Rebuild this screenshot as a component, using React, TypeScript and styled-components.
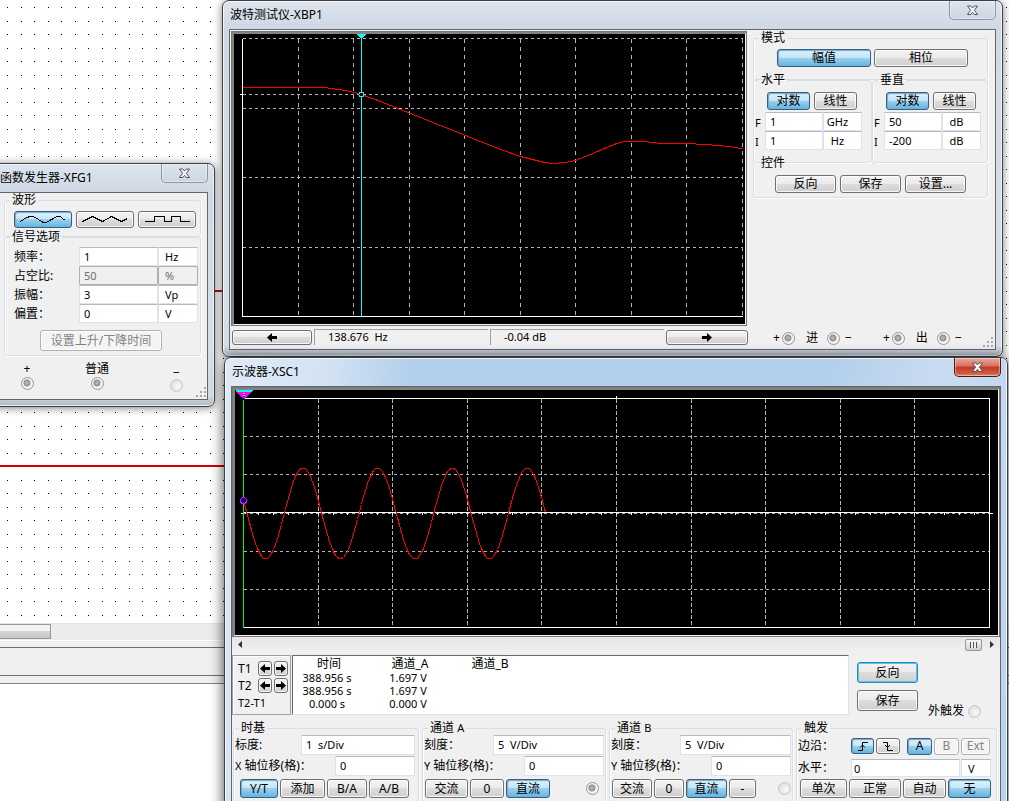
import React from 'react';
import styled, { createGlobalStyle, css } from 'styled-components';

const GlobalStyle = createGlobalStyle`
  *, *::before, *::after { box-sizing: border-box; }
  body { margin: 0; background: #fff; }
  body, button, input {
    font-family: "Noto Sans", "Noto Sans CJK SC", sans-serif;
    font-size: 12px;
    line-height: 16px;
    color: #000;
  }
`;

/* ---------- desktop ---------- */

const Desktop = styled.main`
  position: relative;
  display: flex;
  flex-direction: column;
  height: 100vh;
  overflow: hidden;
  background: #f0f0f0;
`;

const Sheet = styled.div`
  flex: 1;
  min-height: 0;
`;

const SheetDots = styled.svg`
  display: block;
  width: 100%;
  height: 100%;
  background: #fff;
`;

const SheetScroll = styled.div`
  height: 18px;
  border-top: 1px solid #e3e3e3;
  border-bottom: 1px solid #fff;
  background: #ececec;
`;

const SheetThumb = styled.div`
  width: 51px;
  height: 15px;
  border: 1px solid #979797;
  border-left: 0;
  background: linear-gradient(#f3f3f3 0 45%, #d6d6d8 50%, #c6c7ca);
`;

const TabStrip = styled.div`
  height: 29px;
  margin: 6px 0 7px;
  border: solid #6f6b70;
  border-width: 1px 0;
`;

const LogPane = styled.div`
  height: 118px;
  border-top: 1px solid #828282;
  background: #fff;
`;

/* ---------- window chrome ---------- */

type Place = { $x: number; $y: number; $w: number; $active?: boolean };

const Frame = styled.section<Place>`
  position: absolute;
  left: ${p => p.$x}px;
  top: ${p => p.$y}px;
  width: ${p => p.$w}px;
  padding: 0 6px 6px;
  border: 1px solid #3c4148;
  border-radius: 7px;
  background: ${p =>
    p.$active
      ? 'linear-gradient(100deg, #dfeaf6 0, #d3e3f4 12%, #b2cfeb 22%, #b2cfeb 70%, #cbdcf1 84%, #b7d2ee 100%)'
      : 'linear-gradient(#dde4ee, #cfd8e4 28px, #d4dde8 60%, #d4dde8 calc(100% - 10px), #aeb8c4)'};
  box-shadow: inset 0 0 0 1px rgba(255, 255, 255, 0.75),
    ${p => (p.$active ? '0 2px 14px rgba(0,0,0,.75)' : '0 1px 8px rgba(0,0,0,.5)')};
`;

const TitleBar = styled.header`
  display: flex;
  justify-content: space-between;
  height: 28px;
`;

const Title = styled.h1`
  margin: 0;
  padding-left: 1px;
  font-size: 12px;
  font-weight: 400;
  line-height: 28px;
`;

const CloseButton = styled.button<{ $active?: boolean }>`
  display: flex;
  align-items: center;
  justify-content: center;
  width: 47px;
  height: 19px;
  padding: 0;
  border: 1px solid ${p => (p.$active ? '#4b1812' : '#8c96a3')};
  border-top: 0;
  border-radius: 0 0 5px 5px;
  background: ${p =>
    p.$active
      ? 'linear-gradient(#e8a99c, #d6705c 45%, #c03a25 50%, #cf5a42 85%, #e09070)'
      : 'linear-gradient(#dce3ec, #cdd6e2)'};
  box-shadow: inset 0 0 0 1px rgba(255, 255, 255, 0.4);
`;

const Client = styled.div`
  display: flex;
  border: 1px solid #63686d;
  background: #f0f0f0;
`;

const Column = styled(Client)`
  flex-direction: column;
`;

const Grip = styled.svg`
  display: block;
  flex: none;
  width: 12px;
  height: 12px;
  fill: #a8a8a8;
`;

const SizeGrip = () => (
  <Grip viewBox="0 0 12 12" aria-hidden="true">
    <path d="M9 1h2v2h-2zM5 5h2v2h-2zM9 5h2v2h-2zM1 9h2v2h-2zM5 9h2v2h-2zM9 9h2v2h-2z" />
  </Grip>
);

function ToolWindow(props: {
  title: string;
  x: number;
  y: number;
  w: number;
  active?: boolean;
  children: React.ReactNode;
}) {
  const { title, x, y, w, active, children } = props;
  return (
    <Frame $x={x} $y={y} $w={w} $active={active} aria-label={title}>
      <TitleBar>
        <Title>{title}</Title>
        <CloseButton $active={active} aria-label="关闭">
          <svg width="13" height="11" viewBox="0 0 13 11">
            <path
              d="M1.5 1h3.3l1.7 2 1.7-2h3.3L8.4 5.2l3.1 4.300H8.200L6.500 7.300 4.800 9.500H1.500l3.100-4.300z"
              fill={active ? '#fff' : '#f4f6f9'}
              stroke="#4d5462"
              strokeWidth="1"
            />
          </svg>
        </CloseButton>
      </TitleBar>
      {children}
    </Frame>
  );
}

/* ---------- controls ---------- */

const Button = styled.button<{ $w: number; $h?: number; $on?: boolean; $focus?: boolean }>`
  display: flex;
  flex: none;
  align-items: center;
  justify-content: center;
  width: ${p => p.$w}px;
  height: ${p => p.$h ?? 19}px;
  padding: 0;
  line-height: 14px;
  border: 1px solid #707070;
  border-radius: 3px;
  background: linear-gradient(#f3f3f3, #ebebeb 48%, #dddddd 50%, #cfcfcf);
  box-shadow: inset 0 0 0 1px rgba(255, 255, 255, 0.8);
  ${p =>
    p.$on &&
    css`
      border-color: #2c628b;
      background: linear-gradient(#e0f1fa, #c4e5f6 48%, #98d1ef 50%, #68b3db);
      box-shadow: inset 1px 1px 1px #7ba6c2;
    `}
  ${p =>
    p.$focus &&
    css`
      border-color: #3c7fb1;
      box-shadow: inset 0 0 0 1px #48cdf2;
    `}
  &:disabled {
    border-color: #adb2b5;
    color: #838383;
    background: #f4f4f4;
  }
`;

const Field = styled.input<{ $w: number; $h?: number; $indent?: number; $center?: boolean }>`
  flex: none;
  width: ${p => p.$w}px;
  height: ${p => p.$h ?? 20}px;
  padding: 0 ${p => (p.$center ? 10 : 0)}px 0 ${p => p.$indent ?? 4}px;
  border: 1px solid #dde3ea;
  border-top-color: #b4b9c2;
  border-radius: 1px;
  background: #fff;
  font-size: 11px;
  text-align: ${p => (p.$center ? 'center' : 'left')};
  &:disabled {
    border-color: #afafaf;
    color: #6d6d6d;
    background: #f0f0f0;
  }
`;

const Socket = styled.input.attrs({ type: 'radio' })`
  appearance: none;
  flex: none;
  width: 13px;
  height: 13px;
  margin: 0;
  border: 1px solid #959595;
  border-radius: 50%;
  background: radial-gradient(circle at 45% 45%, #c4c4c4 0, #8e8e8e 3px, #f4f4f4 4px);
  &:disabled {
    border-color: #c6c6c6;
    background: radial-gradient(circle at 60% 60%, #fafafa 0, #e2e2e2 6px);
  }
`;

const Group = styled.fieldset<{ $w?: number; $bottom?: number; $top?: number; $right?: number }>`
  min-width: 0;
  width: ${p => (p.$w ? `${p.$w}px` : 'auto')};
  margin: 0;
  padding: ${p => p.$top ?? 0}px ${p => p.$right ?? 1}px ${p => p.$bottom ?? 3}px 1px;
  border: 1px solid #d5dfe5;
  border-radius: 3px;
  box-shadow: inset 1px 0 0 #fff, 1px 1px 0 #fff;
`;

const Legend = styled.legend`
  margin-left: 4px;
  padding: 0 2px;
  line-height: 12px;
`;

const Stack = styled.div`
  & > * + * {
    margin-top: -6px;
  }
`;

const Row = styled.div<{ $indent?: number; $gap?: number; $top?: number }>`
  display: flex;
  align-items: center;
  gap: ${p => p.$gap ?? 3}px;
  margin-top: ${p => p.$top ?? 0}px;
  padding-left: ${p => p.$indent ?? 0}px;
`;

const Push = styled.div`
  flex: 1;
`;

const ArrowLeft = () => (
  <svg width="10" height="9" viewBox="0 0 10 9" aria-hidden="true">
    <path d="M0 4.500L5 0v3H10v3H5v3z" />
  </svg>
);

const ArrowRight = () => (
  <svg width="10" height="9" viewBox="0 0 10 9" aria-hidden="true">
    <path d="M10 4.500L5 0v3H0v3h5v3z" />
  </svg>
);

/* ---------- instrument screens ---------- */

const Screen = styled.div`
  border: solid;
  border-width: 3px 2px 2px 3px;
  border-color: #85837e #f6f4ee #f6f4ee #85837e;
  outline: 1px solid #77777a;
  outline-offset: -1px;
  background: #000;
`;

const Plot = styled.svg`
  display: block;
  width: 100%;
  height: auto;
  shape-rendering: crispEdges;
  fill: none;
`;

const path = (points: number[][]) => points.map(([x, y], i) => `${i ? 'L' : 'M'}${x} ${y}`).join('');

const bodeCurve = path([
  [0, 49], [82, 49], [96, 51], [108, 53], [119, 56], [138, 63], [158, 71], [168, 75], [208, 91],
  [258, 111], [278, 118], [290, 121], [302, 124], [311, 125], [323, 124], [333, 122], [348, 116],
  [363, 109.5], [373, 105.5], [381, 103], [403, 103], [418, 105], [453, 105.5], [478, 107],
  [493, 109], [500, 110.5],
]);

const bodeColumns = [56, 111, 167, 222, 278, 333, 389, 444, 500];
const bodeRows = [0, 56, 70, 139, 209];

function BodeScreen() {
  return (
    <Screen>
      <Plot viewBox="0 0 511 290" role="img" aria-label="幅频曲线">
        <g transform="translate(8.5 4.5)">
          <g stroke="#b4b4b4" strokeDasharray="3 3">
            {bodeColumns.map(x => <path key={x} d={`M${x} 0V278`} strokeDasharray="4 4" />)}
            {bodeRows.map(y => <path key={y} d={`M0 ${y}H500`} />)}
          </g>
          <path d="M0 0V278H500M-3 56H0" stroke="#fff" />
          <path d={bodeCurve} stroke="#f00" />
          <path d="M119 -5V278" stroke="#0ff" />
          <path d="M114 -5H124L119 1Z" fill="#0ff" />
          <circle cx="119" cy="56" r="2.5" stroke="#0ff" fill="#000" />
        </g>
      </Plot>
    </Screen>
  );
}

const scopeWave = path(
  Array.from({ length: 152 }, (_, i) => {
    const x = i * 2;
    return [x, Math.round(115 + 45.5 * Math.sin((2 * Math.PI * (x - 3.5)) / 74.7))];
  }).map(([x, y], i) => (i === 0 ? [0, 102] : [x, y])),
);
const scopeColumns = [75, 149, 224, 298, 373, 448, 522, 597, 671];
const scopeRows = [38, 76, 115, 153, 191];

function ScopeScreen() {
  return (
    <Screen>
      <Plot viewBox="0 0 763 245" role="img" aria-label="示波器波形">
        <g transform="translate(8.5 8.5)">
          <g stroke="#b4b4b4" strokeDasharray="3 3">
            {scopeColumns.map(x => <path key={x} d={`M${x} 0V229`} strokeDasharray="4 2" />)}
            {scopeRows.map(y => <path key={y} d={`M0 ${y}H746`} />)}
          </g>
          <path d="M0 0H746V229H0M373 -3V0M-3 115H0M746 115H749M0 114H746" stroke="#fff" />
          <path
            d={Array.from({ length: 49 }, (_, i) => `M${Math.round((i + 1) * 14.92)} 114v2`).join('')}
            stroke="#fff"
          />
          <path d={scopeWave} stroke="#f00" />
          <path d="M0 0V229" stroke="#0f0" />
          <path d="M-8 -8H9L0 1Z" fill="#f0f" />
          <path d="M-8 -8H9M-7 -7H8" stroke="#0ff" />
          <path d="M-1 -5H1M-1 -3H1" stroke="#ff0" />
          <path d="M0 -1V1M-1 -4H1M-1 -2H1" stroke="#00c" />
          <circle cx="0" cy="102" r="3" stroke="#f0f" fill="#000080" />
        </g>
      </Plot>
    </Screen>
  );
}

/* ---------- function generator ---------- */

const Parameters = styled.div`
  display: grid;
  grid-template-columns: 65px 79px 40px;
  grid-auto-rows: 19px;
  align-items: center;
  padding-left: 8px;
`;

const GeneratorBody = styled.div`
  padding: 1px 6px 0 4px;
`;

const GeneratorPorts = styled.div`
  display: flex;
  align-items: flex-end;
  height: 43px;
  padding: 0 0 1px 14px;
`;

const PortColumn = styled.label`
  display: flex;
  flex-direction: column;
  align-items: center;
  width: 26px;
  margin-right: 44px;
  padding-bottom: 8px;
  line-height: 16px;
`;

const PortEnd = styled.div`
  display: flex;
  align-items: flex-end;
  gap: 12px;
`;

const PortMinus = styled.label`
  display: flex;
  flex-direction: column;
  align-items: center;
  padding-bottom: 6px;
  line-height: 12px;
`;

const Center = styled.div`
  display: flex;
  justify-content: center;
  margin: 7px 3px 0 0;
`;

const waves = [
  { name: '正弦波', d: 'M0 5L3 3L6 1L10 0H12L15 1L18 3L21 5L23 6H26L29 4L33 2L36 0H40L42 2L45 4' },
  { name: '三角波', d: 'M0 5L10 0L20 5L29 0L39 5L45 2' },
  { name: '方波', d: 'M0 5H10V0H20V5H27V0H36V5H45' },
];

const parameters = [
  { label: '频率：', value: '1', unit: 'Hz' },
  { label: '占空比:', value: '50', unit: '%', off: true },
  { label: '振幅：', value: '3', unit: 'Vp' },
  { label: '偏置：', value: '0', unit: 'V' },
];

function FunctionGenerator() {
  return (
    <ToolWindow title="函数发生器-XFG1" x={-8} y={163} w={223}>
      <Column>
        <GeneratorBody>
          <Stack>
            <Group $top={5} $bottom={8}>
              <Legend>波形</Legend>
              <Row $indent={8} $gap={4}>
                {waves.map((w, i) => (
                  <Button key={w.name} $w={58} $h={17} $on={i === 0} aria-label={w.name}>
                    <svg width="46" height="8" viewBox="0 0 46 8" shapeRendering="crispEdges">
                      <path d={w.d} transform="translate(.5 .5)" fill="none" stroke="#000" />
                    </svg>
                  </Button>
                ))}
              </Row>
            </Group>
            <Group $top={4} $bottom={4}>
              <Legend>信号选项</Legend>
              <Parameters>
                {parameters.map(p => (
                  <React.Fragment key={p.label}>
                    <label htmlFor={`fg-${p.unit}`}>{p.label}</label>
                    <Field id={`fg-${p.unit}`} $w={79} $h={19} disabled={p.off} defaultValue={p.value} />
                    <Field $w={40} $h={19} $indent={6} disabled={p.off} defaultValue={p.unit} aria-label={`${p.label}单位`} />
                  </React.Fragment>
                ))}
              </Parameters>
              <Center>
                <Button $w={122} $h={21} disabled>设置上升/下降时间</Button>
              </Center>
            </Group>
          </Stack>
        </GeneratorBody>
        <GeneratorPorts>
          <PortColumn>+<Socket name="fg-plus" /></PortColumn>
          <PortColumn>普通<Socket name="fg-common" /></PortColumn>
          <Push />
          <PortEnd>
            <PortMinus>−<Socket name="fg-minus" disabled /></PortMinus>
            <SizeGrip />
          </PortEnd>
        </GeneratorPorts>
      </Column>
    </ToolWindow>
  );
}

/* ---------- bode plotter ---------- */

const BodeLeft = styled.div`
  flex: none;
  width: 518px;
  padding: 1px 0 4px 1px;
`;

const BodeScreenBox = styled.div`
  padding-right: 1px;
`;

const Readout = styled.output`
  flex: 1;
  height: 16px;
  padding-left: 13px;
  border: solid #a0a0a0;
  border-width: 1px 0 0 1px;
  font-size: 11px;
  line-height: 14px;
  white-space: pre;
`;

const BodeSide = styled.div`
  flex: 1;
  display: flex;
  flex-direction: column;
  min-width: 0;
  padding: 2px 1px 1px 5px;
`;

const SideGroups = styled(Stack)`
  padding-right: 6px;
`;

const Halves = styled.div`
  display: grid;
  grid-template-columns: 119px 1fr;
`;

const Limits = styled.div`
  display: grid;
  grid-template-columns: 10px 58px 39px;
  align-items: center;
  margin-top: 2px;
  font-size: 11px;
  & > label { padding-top: 3px; }
`;

const Ports = styled.div`
  display: flex;
  align-items: flex-end;
  padding-left: 20px;
`;

const PortPair = styled.div`
  display: flex;
  align-items: center;
  gap: 2px;
  margin-right: 31px;
  padding-bottom: 2px;
  &:last-of-type { margin-right: 0; }
  & > b { font-weight: 400; padding: 0 7px 0 9px; }
`;

function AxisGroup(props: { name: string; id: string; limits: string[][] }) {
  const { name, id, limits } = props;
  return (
    <Group $top={6} $bottom={12}>
      <Legend>{name}</Legend>
      <Row $indent={12} $gap={4}>
        <Button $w={43} $h={18} $on>对数</Button>
        <Button $w={43} $h={18}>线性</Button>
      </Row>
      <Limits>
        {limits.map(([key, value, unit]) => (
          <React.Fragment key={key}>
            <label htmlFor={id + key}>{key}</label>
            <Field id={id + key} $w={58} $h={19} defaultValue={value} />
            <Field $w={39} $h={19} $center $indent={0} defaultValue={unit} aria-label={`${name}${key}单位`} />
          </React.Fragment>
        ))}
      </Limits>
    </Group>
  );
}

function BodePlotter() {
  return (
    <ToolWindow title="波特测试仪-XBP1" x={222} y={0} w={781}>
      <Client>
        <BodeLeft>
          <BodeScreenBox><BodeScreen /></BodeScreenBox>
          <Row $top={3} $gap={2} $indent={1}>
            <Button $w={80} $h={15} aria-label="左移"><ArrowLeft /></Button>
            <Readout>138.676  Hz</Readout>
            <Readout>-0.04 dB</Readout>
            <Button $w={82} $h={15} aria-label="右移"><ArrowRight /></Button>
          </Row>
        </BodeLeft>
        <BodeSide>
          <SideGroups>
            <Group $top={5} $bottom={12}>
              <Legend>模式</Legend>
              <Row $indent={22}>
                <Button $w={94} $h={18} $on>幅值</Button>
                <Button $w={94} $h={18}>相位</Button>
              </Row>
            </Group>
            <Halves>
              <AxisGroup name="水平" id="h" limits={[['F', '1', 'GHz'], ['I', '1', 'Hz']]} />
              <AxisGroup name="垂直" id="v" limits={[['F', '50', 'dB'], ['I', '-200', 'dB']]} />
            </Halves>
            <Group $top={6} $bottom={4}>
              <Legend>控件</Legend>
              <Row $indent={20} $gap={4}>
                <Button $w={61} $h={18}>反向</Button>
                <Button $w={61} $h={18}>保存</Button>
                <Button $w={61} $h={18}>设置...</Button>
              </Row>
            </Group>
          </SideGroups>
          <Push />
          <Ports>
            {['进', '出'].map(name => (
              <PortPair key={name}>
                +<Socket name={`${name}+`} aria-label={`${name} +`} />
                <b>{name}</b>
                <Socket name={`${name}-`} aria-label={`${name} −`} />&nbsp;−
              </PortPair>
            ))}
            <SpacerGrip><SizeGrip /></SpacerGrip>
          </Ports>
        </BodeSide>
      </Client>
    </ToolWindow>
  );
}

const SpacerGrip = styled.span`
  flex: 1;
  display: flex;
  justify-content: flex-end;
  min-width: 12px;
  margin-left: -31px;
`;

/* ---------- oscilloscope ---------- */

const TimeScroll = styled.div`
  display: flex;
  align-items: center;
  height: 15px;
  margin-bottom: 3px;
  padding: 0 6px;
  background: linear-gradient(#e6e6e6, #f0f0f0);
`;

const TimeThumb = styled.div`
  width: 17px;
  height: 12px;
  margin-right: 8px;
  padding: 2px 4px;
  border: 1px solid #9a9a9a;
  border-radius: 2px;
  background: linear-gradient(#f5f5f5, #d0d0d2);
  &::before {
    content: '';
    display: block;
    height: 6px;
    background: repeating-linear-gradient(90deg, #555 0 1px, #eee 1px 3px);
  }
`;

const Readings = styled.div`
  display: flex;
  height: 60px;
`;

const CursorPanel = styled.div`
  display: grid;
  grid-template-columns: 18px 14px 14px;
  grid-template-rows: 15px 15px 16px;
  gap: 2px;
  align-items: center;
  width: 59px;
  margin-right: 1px;
  padding: 5px 2px 0 5px;
  border: 1px solid #a0a0a0;
  box-shadow: inset 1px 1px 0 #fff;
  & > span { white-space: nowrap; }
`;

const TableBox = styled.div`
  width: 557px;
  border: 1px solid #696969;
  border-right-color: #e3e3e3;
  border-bottom-color: #e3e3e3;
  background: #fff;
`;

const ReadingTable = styled.table`
  table-layout: fixed;
  width: 228px;
  border-collapse: collapse;
  text-align: center;
  font-size: 11px;
  line-height: 13px;
  th, td { padding: 0; height: 13px; font-weight: 400; white-space: nowrap; }
  th { height: 15px; padding-left: 4px; font-size: 12px; }
`;

const Actions = styled.div`
  display: flex;
  flex-direction: column;
  gap: 7px;
  padding: 7px 0 0 8px;
`;

const ExternalTrigger = styled.label`
  display: flex;
  align-items: center;
  align-self: flex-end;
  gap: 4px;
  height: 8px;
  margin-left: 10px;
`;

const Settings = styled.div`
  display: flex;
  gap: 3px;
  padding: 7px 3px 2px 1px;
`;

const Line = styled.div<{ $h?: number; $gap?: number }>`
  display: flex;
  align-items: center;
  gap: ${p => p.$gap ?? 1}px;
  height: ${p => p.$h ?? 21}px;
  & > label, & > span { flex: 1; white-space: nowrap; }
`;

const Latin = styled.small`
  font-size: 11px;
`;

const Gap = styled.i`
  width: 3px;
`;

function Channel(props: {
  name: string;
  w: number;
  right?: number;
  scale: string;
  scaleLabel: string;
  axis: string;
  fieldW: number;
  children: React.ReactNode;
  title: React.ReactNode;
}) {
  const { name, w, right, scale, scaleLabel, axis, fieldW, children, title } = props;
  return (
    <Group $w={w} $right={right}>
      <Legend>{title}</Legend>
      <Line>
        <label htmlFor={`${name}-scale`}>{scaleLabel}</label>
        <Field id={`${name}-scale`} $w={fieldW} defaultValue={scale} />
      </Line>
      <Line>
        <label htmlFor={`${name}-offset`}><Latin>{axis}</Latin> 轴位移(格)：</label>
        <Field id={`${name}-offset`} $w={80} defaultValue="0" />
      </Line>
      {children}
    </Group>
  );
}

function Oscilloscope() {
  const readings = [
    ['388.956 s', '1.697 V', ''],
    ['388.956 s', '1.697 V', ''],
    ['0.000 s', '0.000 V', ''],
  ];
  return (
    <ToolWindow title="示波器-XSC1" x={224} y={357} w={784} active>
      <Column>
        <ScopeScreen />
        <TimeScroll>
          <svg width="4" height="7" viewBox="0 0 4 7"><path d="M4 0v7L0 3.500z" fill="#333" /></svg>
          <Push />
          <TimeThumb />
          <svg width="4" height="7" viewBox="0 0 4 7"><path d="M0 0v7l4-3.500z" fill="#333" /></svg>
        </TimeScroll>
        <Readings>
          <CursorPanel>
            {['T1', 'T2'].map(t => (
              <React.Fragment key={t}>
                <span>{t}</span>
                <Button $w={14} $h={15} aria-label={`${t} 左移`}><ArrowLeft /></Button>
                <Button $w={14} $h={15} aria-label={`${t} 右移`}><ArrowRight /></Button>
              </React.Fragment>
            ))}
            <span><Latin>T2-T1</Latin></span>
          </CursorPanel>
          <TableBox>
            <ReadingTable>
              <colgroup>
                <col width="68" />
                <col width="94" />
                <col width="66" />
              </colgroup>
              <thead>
                <tr><th>时间</th><th>通道_A</th><th>通道_B</th></tr>
              </thead>
              <tbody>
                {readings.map((r, i) => (
                  <tr key={i}>{r.map((c, j) => <td key={j}>{c}</td>)}</tr>
                ))}
              </tbody>
            </ReadingTable>
          </TableBox>
          <Actions>
            <Button $w={61} $h={21} $focus>反向</Button>
            <Button $w={61} $h={21}>保存</Button>
          </Actions>
          <ExternalTrigger>外触发<Socket name="ext" disabled /></ExternalTrigger>
        </Readings>
        <Settings>
          <Channel name="time" title="时基" w={186} right={3} scale="1  s/Div" scaleLabel="标度:" axis="X" fieldW={114}>
            <Row $indent={5} $top={3} $gap={2}>
              <Button $w={38} $on>Y/T</Button>
              <Button $w={45}>添加</Button>
              <Button $w={40}>B/A</Button>
              <Button $w={40}>A/B</Button>
            </Row>
          </Channel>
          <Channel name="a" title={<>通道 <Latin>A</Latin></>} w={184} scale="5  V/Div" scaleLabel="刻度：" axis="Y" fieldW={111}>
            <Row $indent={1} $top={3} $gap={2}>
              <Button $w={43}>交流</Button>
              <Button $w={34}>0</Button>
              <Button $w={44} $on>直流</Button>
              <Push />
              <Socket name="port-a" aria-label="通道 A" />
              <Gap />
            </Row>
          </Channel>
          <Channel name="b" title={<>通道 <Latin>B</Latin></>} w={184} scale="5  V/Div" scaleLabel="刻度：" axis="Y" fieldW={111}>
            <Row $indent={1} $top={3} $gap={2}>
              <Button $w={40}>交流</Button>
              <Button $w={30}>0</Button>
              <Button $w={41} $on>直流</Button>
              <Button $w={27}>-</Button>
              <Push />
              <Socket name="port-b" aria-label="通道 B" disabled />
            </Row>
          </Channel>
          <Group $w={201}>
            <Legend>触发</Legend>
            <Line $h={24} $gap={2}>
              <span>边沿：</span>
              <Button $w={23} $h={16} $on aria-label="上升沿">
                <svg width="12" height="11" viewBox="0 0 12 11" fill="none" stroke="#000">
                  <path d="M1 9.500h4.500v-8H11M3 6.500L5.500 4 8 6.500" />
                </svg>
              </Button>
              <Button $w={24} $h={16} aria-label="下降沿">
                <svg width="12" height="11" viewBox="0 0 12 11" fill="none" stroke="#000">
                  <path d="M1 1.500h4.500v8H11M3 4L5.500 6.500 8 4" />
                </svg>
              </Button>
              <Gap />
              <Button $w={25} $h={17} $on>A</Button>
              <Button $w={25} $h={17} disabled>B</Button>
              <Button $w={29} $h={17} disabled>Ext</Button>
              <Gap />
            </Line>
            <Line $h={20}>
              <label htmlFor="level">水平：</label>
              <Field id="level" $w={109} $h={18} $indent={2} defaultValue="0" />
              <Field $w={30} $h={18} $indent={6} defaultValue="V" aria-label="电平单位" />
              <Gap />
            </Line>
            <Row $indent={2} $top={1} $gap={2}>
              <Button $w={47}>单次</Button>
              <Button $w={52}>正常</Button>
              <Button $w={43}>自动</Button>
              <Button $w={43} $on>无</Button>
            </Row>
          </Group>
        </Settings>
      </Column>
    </ToolWindow>
  );
}

/* ---------- schematic sheet ---------- */

export default function App() {
  return (
    <>
      <GlobalStyle />
      <Desktop>
        <Sheet>
          <SheetDots shapeRendering="crispEdges" aria-hidden="true">
            <defs>
              <pattern id="grid" width="27" height="27" patternUnits="userSpaceOnUse">
                <path d="M7 7h1v1h-1zM21 7h1v1h-1zM7 21h1v1h-1zM21 21h1v1h-1z" fill="#000" />
              </pattern>
            </defs>
            <rect width="100%" height="100%" fill="url(#grid)" />
            <path d="M0 466H240M200 291H240" stroke="#d40000" strokeWidth="2" />
            <path d="M344 356.500h8M371 356.500h2" stroke="#00008b" />
          </SheetDots>
        </Sheet>
        <SheetScroll><SheetThumb /></SheetScroll>
        <TabStrip />
        <LogPane />
        <FunctionGenerator />
        <BodePlotter />
        <Oscilloscope />
      </Desktop>
    </>
  );
}
